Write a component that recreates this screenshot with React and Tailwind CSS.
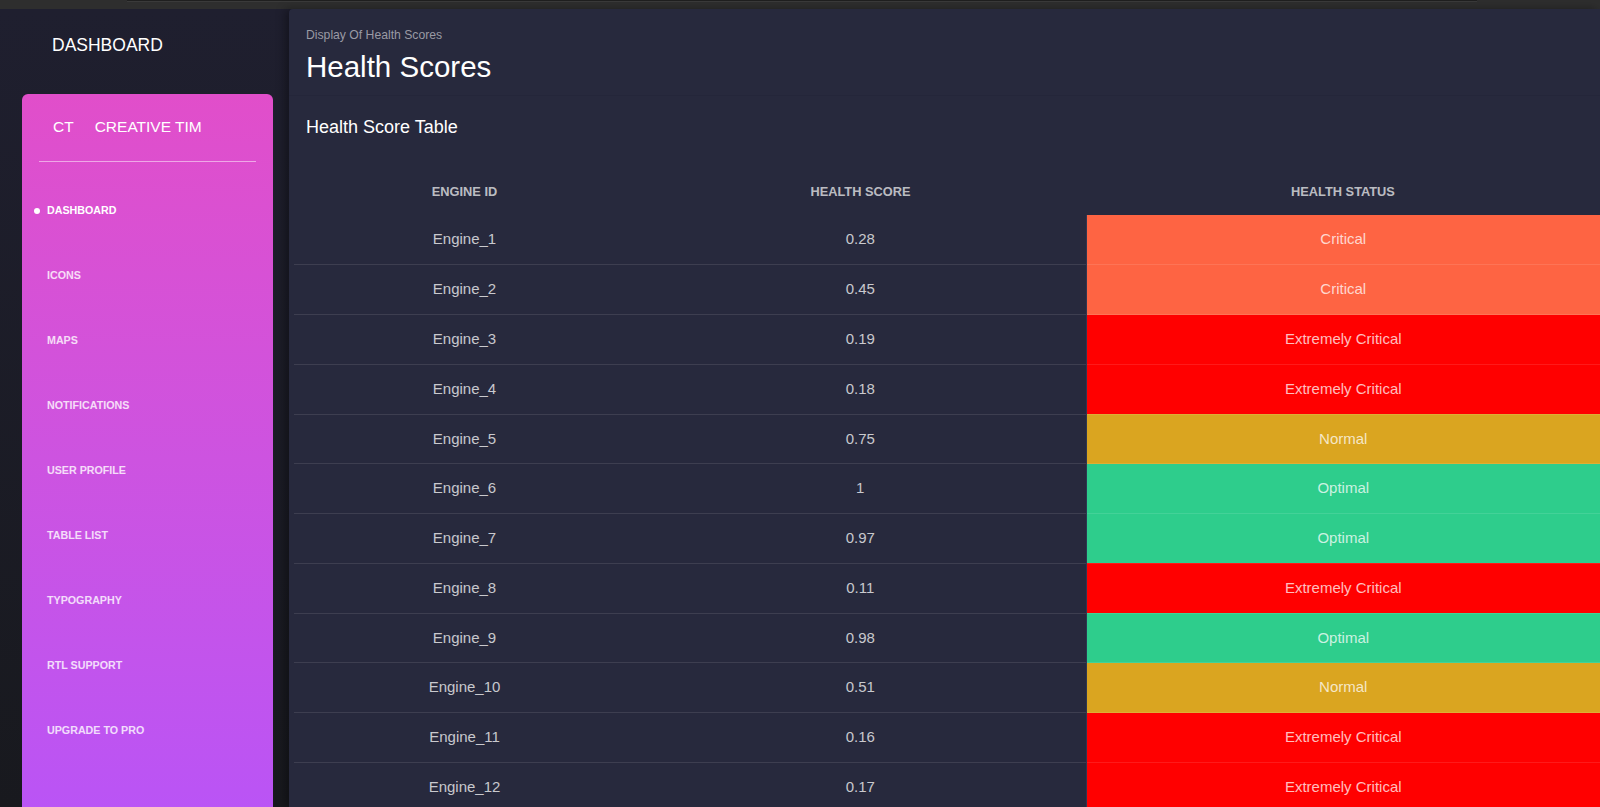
import React from 'react';

const menu = [
  'Dashboard',
  'Icons',
  'Maps',
  'Notifications',
  'User Profile',
  'Table List',
  'Typography',
  'RTL Support',
  'Upgrade to PRO',
];

const engines = [
  ['Engine_1', '0.28', 'Critical'],
  ['Engine_2', '0.45', 'Critical'],
  ['Engine_3', '0.19', 'Extremely Critical'],
  ['Engine_4', '0.18', 'Extremely Critical'],
  ['Engine_5', '0.75', 'Normal'],
  ['Engine_6', '1', 'Optimal'],
  ['Engine_7', '0.97', 'Optimal'],
  ['Engine_8', '0.11', 'Extremely Critical'],
  ['Engine_9', '0.98', 'Optimal'],
  ['Engine_10', '0.51', 'Normal'],
  ['Engine_11', '0.16', 'Extremely Critical'],
  ['Engine_12', '0.17', 'Extremely Critical'],
];

const statusBg = {
  Critical: 'bg-[#fe6443]',
  'Extremely Critical': 'bg-[#ff0000]',
  Normal: 'bg-[#daa520]',
  Optimal: 'bg-[#2ecd8c]',
};

const Sidebar = () => (
  <aside className="w-[289px] shrink-0 flex flex-col bg-gradient-to-b from-[#1f1f2f] to-[#18191e]">
    <div className="pt-[26px] pl-[52px] text-[17.5px] leading-[20px] text-white">DASHBOARD</div>

    <div className="mt-[39px] ml-[22px] w-[251px] flex-1 rounded-t-[6px] bg-gradient-to-b from-[#e14eca] to-[#ba54f5]">
      <div className="pt-[24px] pl-[31px] flex items-center gap-[21px] text-[15.5px] leading-[18px] text-white">
        <span>CT</span>
        <span>CREATIVE TIM</span>
      </div>
      <div className="mt-[25px] mx-[17px] h-px bg-white/50" />

      <nav className="mt-[16px]">
        {menu.map((item, i) => (
          <div key={item} className="h-[65px] flex items-center pl-[12px] gap-[7px]">
            <span className={`w-[6px] h-[6px] rounded-full ${i === 0 ? 'bg-white' : 'bg-transparent'}`} />
            <span
              className={`uppercase font-bold text-[10.7px] leading-[13px] ${
                i === 0 ? 'text-white' : 'text-white/80'
              }`}
            >
              {item}
            </span>
          </div>
        ))}
      </nav>
    </div>
  </aside>
);

const HealthTable = () => (
  <table className="ml-[5px] w-[1306px] table-fixed border-collapse">
    <colgroup>
      <col className="w-[341px]" />
      <col className="w-[451px]" />
      <col className="w-[514px]" />
    </colgroup>
    <thead>
      <tr className="h-[48px]">
        {['Engine ID', 'Health Score', 'Health Status'].map((h) => (
          <th key={h} className="p-0 pt-[2px] text-center uppercase font-bold text-[12.8px] text-white/70">
            {h}
          </th>
        ))}
      </tr>
    </thead>
    <tbody>
      {engines.map(([id, score, status]) => (
        <tr key={id} className="h-[49.75px] border-b border-white/10">
          <td className="p-0 text-center text-[15px] text-white/75">{id}</td>
          <td className="p-0 text-center text-[15px] text-white/75">{score}</td>
          <td className={`p-0 text-center text-[15px] text-white/75 border-l border-[#2f3852] ${statusBg[status]}`}>
            {status}
          </td>
        </tr>
      ))}
    </tbody>
  </table>
);

export default function App() {
  return (
    <div className="h-screen overflow-hidden flex flex-col bg-[#1e1e2e] font-['Liberation_Sans',Arial,sans-serif]">
      <div className="h-[9px] shrink-0 bg-[#2e2e2e] pl-[127px]">
        <div className="h-[2px] w-[1350px] bg-[#1f1f1f] border-b border-[#3a3a3a]" />
      </div>

      <div className="flex flex-1 min-h-0">
        <Sidebar />

        <main className="flex-1 rounded-tl-[4px] bg-[#27293d] shadow-[-4px_0_10px_rgba(0,0,0,0.35)]">
          <header className="px-[17px] pt-[18px] pb-[11px] border-b border-[#24263a]">
            <p className="text-[12.2px] leading-[16px] text-[#9a9aa4]">Display Of Health Scores</p>
            <h1 className="mt-[7px] text-[29.5px] leading-[34px] text-white">Health Scores</h1>
          </header>

          <section className="pt-[21px]">
            <h2 className="px-[17px] text-[18px] leading-[21px] text-white">Health Score Table</h2>
            <div className="mt-[29px]">
              <HealthTable />
            </div>
          </section>
        </main>
      </div>
    </div>
  );
}
